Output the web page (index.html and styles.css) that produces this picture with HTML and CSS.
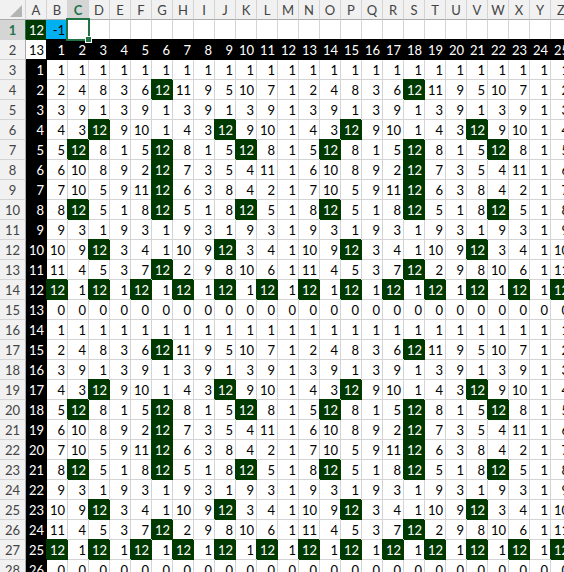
FILE: index.html
```
<!DOCTYPE html>
<html lang="en">
<head>
    <meta charset="UTF-8">
    <meta name="viewport" content="width=device-width, initial-scale=1.0">
    <title>Powers modulo 13</title>
    <link rel="stylesheet" href="styles.css">
</head>
<body>
    <table class="sheet">
        <thead>
            <tr id="letters">
                <td class="corner">
                    <svg width="13" height="13" viewBox="0 0 13 13" aria-hidden="true"><path d="M12 0V12H0Z" fill="#b4b4b4"/></svg>
                </td>
            </tr>
        </thead>
        <tbody id="rows"></tbody>
    </table>

    <script src="script.js"></script>
</body>
</html>
```
FILE: styles.css
```
html,
body {
    height: 100%;
}
body {
    margin: 0;
    overflow: hidden;
    background-color: #fff;
    color: #000;
    font-family: Lato, "Open Sans", sans-serif;
    font-size: 13px;
    line-height: 17px;
}
.sheet {
    border-collapse: separate;
    border-spacing: 0;
}
th,
td {
    box-sizing: border-box;
    min-width: 21px;
    height: 20px;
    padding: 2px 0 0;
    border-right: 1px solid #d4d4d4;
    border-bottom: 1px solid #d4d4d4;
    font-weight: normal;
    white-space: nowrap;
}
td {
    padding-right: 2px;
    text-align: right;
}

/* Column letters and row numbers */
.letter,
.number,
.corner {
    background-color: #f1f1f1;
    color: #444;
    text-align: center;
}
.letter {
    max-width: 21px;
    border-bottom-color: #ababab;
}
.number {
    min-width: 26px;
    border-right-color: #ababab;
}
.corner {
    border-bottom-color: #ababab;
}
.corner svg {
    display: block;
    margin: 1px 0 0 auto;
}
.active {
    background-color: #d5d5d5;
    color: #217346;
    font-weight: bold;
}
.letter.active {
    border-bottom-color: #217346;
}
.number.active {
    border-right-color: #217346;
}

/* Filled cells also cover the grid lines above and to the left */
.index {
    background-color: #000;
    border-color: #000;
    box-shadow: -1px -1px 0 #000;
    color: #fff;
}
.index-column {
    box-shadow: 0 -1px 0 #000;
}
.minus {
    background-color: #00b0f0;
    border-color: #00b0f0;
    box-shadow: -1px 0 0 #00b0f0;
}
.hit {
    background-color: #003a00;
    border-color: #003a00;
    box-shadow: -1px -1px 0 #003a00;
    color: #fff;
}
.base {
    box-shadow: none;
}

/* Selection frame with the fill handle */
.selected {
    position: relative;
}
.selected::before {
    content: "";
    position: absolute;
    z-index: 1;
    inset: -2px;
    border: 2px solid #217346;
}
.selected::after {
    content: "";
    position: absolute;
    z-index: 2;
    right: -4px;
    bottom: -4px;
    width: 5px;
    height: 5px;
    border: 1px solid #fff;
    background-color: #217346;
}
```
FILE: script.js
```
const MODULUS = 13;
const COLUMNS = 26;
const ROWS = 28;

const letters = document.getElementById('letters');
const rows = document.getElementById('rows');

function addHeader(row, text, scope, className) {
    const th = document.createElement('th');
    th.scope = scope;
    th.className = className;
    th.textContent = text;
    row.appendChild(th);
}

function addCell(row, text, className) {
    const td = row.insertCell();
    td.textContent = text;
    if (className) {
        td.className = className;
    }
}

for (let c = 0; c < COLUMNS; c++) {
    addHeader(letters, String.fromCharCode(65 + c), 'col', c === 2 ? 'letter active' : 'letter');
}

for (let r = 1; r <= ROWS; r++) {
    const row = rows.insertRow();
    addHeader(row, r, 'row', r === 1 ? 'number active' : 'number');

    if (r === 1) {
        addCell(row, MODULUS - 1, 'hit base');
        addCell(row, -1, 'minus');
        addCell(row, '', 'selected');
        for (let c = 3; c < COLUMNS; c++) {
            addCell(row, '');
        }
    } else if (r === 2) {
        addCell(row, MODULUS);
        for (let c = 1; c < COLUMNS; c++) {
            addCell(row, c, 'index');
        }
    } else {
        // base ^ exponent mod 13, one factor per column
        const base = r - 2;
        let power = 1;
        addCell(row, base, 'index index-column');
        for (let c = 1; c < COLUMNS; c++) {
            power = (power * base) % MODULUS;
            addCell(row, power, power === MODULUS - 1 ? 'hit' : '');
        }
    }
}
```
